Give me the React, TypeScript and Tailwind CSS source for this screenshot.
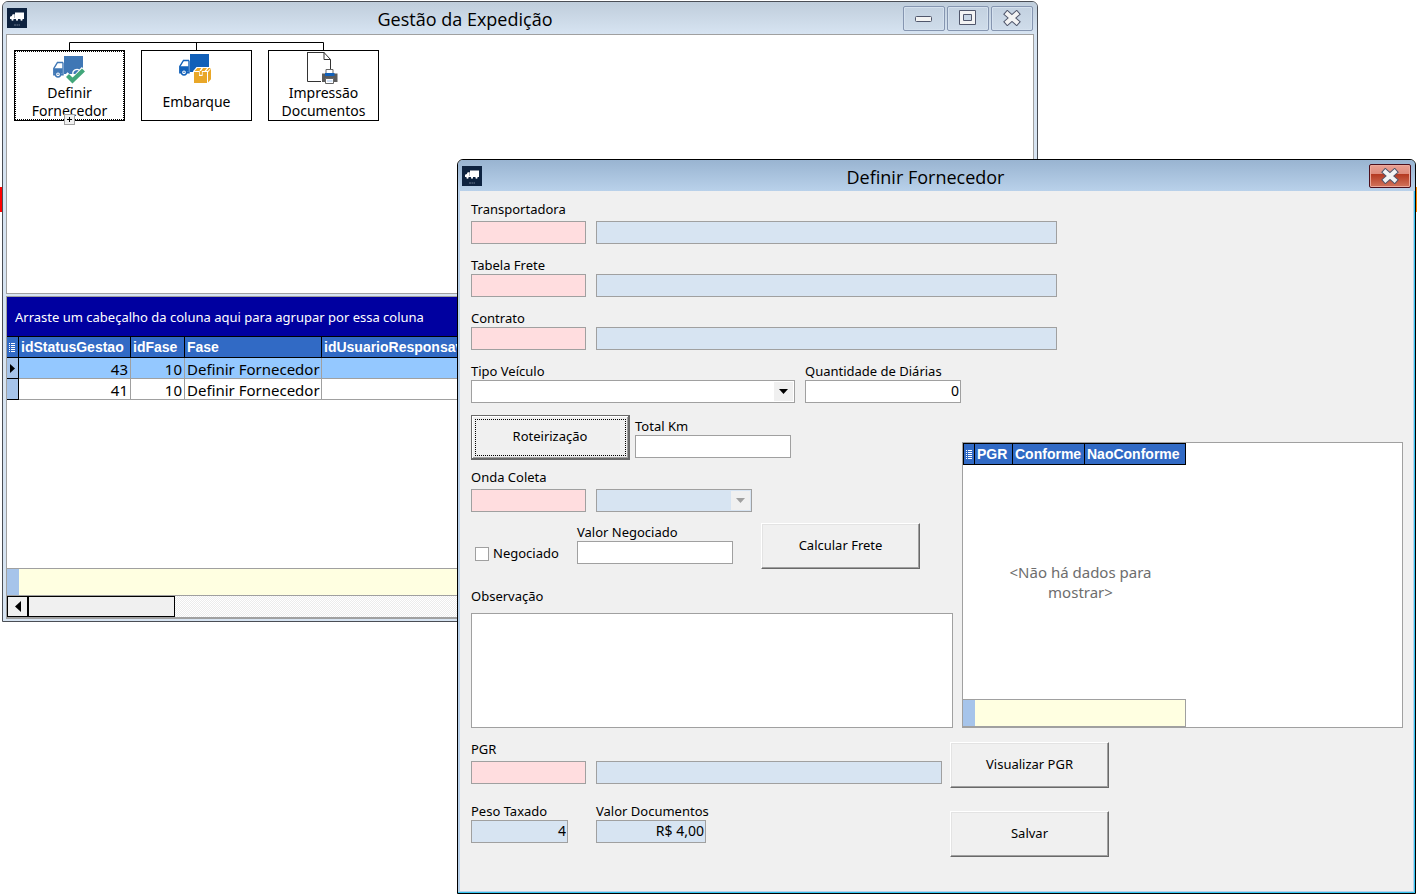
import { useState, type ReactNode } from "react";
import clsx from "clsx";

interface Fase {
    id: number;
    idFase: number;
    fase: string;
}

interface FieldProps {
    id: string;
    label: string;
    spaced?: boolean;
    children: ReactNode;
}

const fases: Fase[] = [
    { id: 43, idFase: 10, fase: "Definir Fornecedor" },
    { id: 41, idFase: 10, fase: "Definir Fornecedor" },
];

const inputBase = "block h-[23px] border border-[#a0a0a0] px-px pb-[2px] text-right text-sm outline-none";
const codeInput = clsx(inputBase, "w-[115px] bg-[#ffdddf]");
const readInput = clsx(inputBase, "bg-[#d7e4f2]");
const whiteInput = clsx(inputBase, "w-[156px] bg-white");
const headCell = "h-[22px] border-y border-r border-black bg-[#316ac5] p-0 pl-[2px] text-left font-[Liberation_Sans] text-sm leading-5 font-bold whitespace-nowrap text-white";
const bodyCell = "h-[21px] border-r border-b border-[#a0a0a0] p-0 px-[2px] pt-[2px] text-[15px] leading-[18px] whitespace-nowrap";

const AppIcon = () => (
    <svg viewBox="0 0 20 20" className="size-5 shrink-0" aria-hidden="true">
        <rect width="20" height="20" fill="#0e2340" />
        <path d="M8 4.500h9v5.500H8z M3 10.500V8.700l1.800-.700.900-1.800h2v4.300z" fill="#fff" />
        <path d="M3 10.500h14" stroke="#fff" />
        <circle cx="5.500" cy="11.700" r="1.100" fill="#fff" />
        <circle cx="10" cy="11.700" r="1.100" fill="#fff" />
        <circle cx="14.500" cy="11.700" r="1.100" fill="#fff" />
        <path d="M7 17h2.500M10 17h1M11.500 17H13" stroke="#6b7a8e" />
    </svg>
);

const Truck = ({ color }: { color: string }) => (
    <>
        <path d="M11 0h19v18H11z" fill={color} />
        <path d="M10 6.5H4.5L.8 12.5v6.3h2M10 6.5v12.3H7.5" fill="none" stroke={color} strokeWidth="1.4" />
        <path d="M1 12.3h8.6v5.5H7.8a3.8 3.8 0 0 0-6 0H1z" fill={color} />
        <path d="M5 8h3.6v4H2.6z" fill="#fff" />
        <circle cx="5" cy="18.3" r="2.6" fill="#fff" stroke={color} strokeWidth="1.5" />
        <circle cx="5" cy="18.3" r=".8" fill={color} />
    </>
);

const TruckCheckIcon = () => (
    <svg viewBox="0 0 32 28" className="h-7 w-8" aria-hidden="true">
        <Truck color="#3f77b5" />
        <path d="M20 18.5a4 4 0 0 1 7-3.500" fill="none" stroke="#fff" strokeWidth="1.3" />
        <path d="M12.500 18.300l7 7L31 13" fill="none" stroke="#fff" strokeWidth="6" />
        <path d="M14.500 19.500l5 5L30.500 14" fill="none" stroke="#41a67a" strokeWidth="4.2" />
    </svg>
);

const TruckBoxIcon = () => (
    <svg viewBox="0 0 33 30" className="h-[30px] w-[33px]" aria-hidden="true">
        <Truck color="#1160b9" />
        <path d="M14 17.2l3.5-4.2h15.5v12l-3.8 4.7H14z" fill="#fff" />
        <path d="M15 18h13v11H15z M15.6 17l2.8-3h4l-2 3z M22 17l2-3h4l-2.4 3z M27.2 17l2.2-3h2.4l-3 3z M29 18.2l3-3.4v10.4l-3 3.4z" fill="#e9a728" />
        <path d="M20 18v4h3.6v-4" fill="#fff" />
        <path d="M20.7 17h2.2v3.8h-2.2z" fill="#e9a728" />
    </svg>
);

const PrintDocIcon = () => (
    <svg viewBox="0 0 31 32" className="h-8 w-[31px]" aria-hidden="true">
        <path d="M.5 0v29.500H14M.5.5H17l6.5 7V17M17 0v7.5h6.5" fill="none" stroke="#333" />
        <path d="M19 17.5h7V22h-7z" fill="#fff" stroke="#666" />
        <path d="M15 21.500h15.5V30H15z" fill="#5b5b5b" />
        <path d="M18 21h9.5v3H18z" fill="#1160b9" />
        <path d="M18.5 26.500h8v5h-8z" fill="#fff" stroke="#666" />
        <path d="M20 29h5.5" stroke="#a9c6ee" />
    </svg>
);

const CloseGlyph = () => (
    <svg viewBox="0 0 18 16" className="h-4 w-[18px]" aria-hidden="true">
        <path d="M4.500 4l9 8M13.500 4l-9 8" stroke="#50566b" strokeWidth="6.2" strokeLinecap="square" />
        <path d="M4.500 4l9 8M13.500 4l-9 8" stroke="#f3f3f3" strokeWidth="4.2" strokeLinecap="square" />
    </svg>
);

const MinimizeGlyph = () => (
    <svg viewBox="0 0 18 16" className="h-4 w-[18px]" aria-hidden="true">
        <rect x=".5" y="6.5" width="16" height="5" rx="1" fill="#f3f3f3" stroke="#50566b" />
    </svg>
);

const MaximizeGlyph = () => (
    <svg viewBox="0 0 18 16" className="h-4 w-[18px]" aria-hidden="true">
        <path d="M.5 .5h16v14H.5z M4.500 4.500v6h8v-6z" fill="#f3f3f3" fillRule="evenodd" stroke="#50566b" />
    </svg>
);

const GridMark = () => (
    <svg viewBox="0 0 6 10" className="h-[10px] w-[6px]" aria-hidden="true">
        <path d="M0 1.500h1M2 1.500h4M0 3.500h1M2 3.500h4M0 5.500h1M2 5.500h4M0 7.500h1M2 7.500h4M0 9.500h1M2 9.500h4" stroke="#fff" />
    </svg>
);

const DropArrow = ({ muted = false }: { muted?: boolean }) => (
    <span className="pointer-events-none absolute top-[2px] right-[2px] flex h-[19px] w-[19px] items-center justify-center bg-[#f0f0f0]">
        <svg viewBox="0 0 9 5" className="h-[5px] w-[9px]" aria-hidden="true">
            <path d="M0 0h9L4.500 5z" fill={muted ? "#a0a0a0" : "#000"} />
        </svg>
    </span>
);

const CaptionButton = ({ label, children }: { label: string; children: ReactNode }) => (
    <button
        type="button"
        aria-label={label}
        className="flex h-[25px] w-[42px] items-center justify-center rounded-[2px] border border-[#8595b0] bg-linear-to-b from-[#c3d1e0] to-[#cfdcea] inset-ring inset-ring-[#d5e1ee]"
    >
        {children}
    </button>
);

const Field = ({ id, label, spaced = false, children }: FieldProps) => (
    <div>
        <label htmlFor={id} className={clsx("block text-[13px] leading-[18px] whitespace-nowrap", spaced && "mb-[3px]")}>
            {label}
        </label>
        {children}
    </div>
);

// Code box followed by a read-only description box
const LookupField = ({ id, label, spaced, width }: { id: string; label: string; spaced?: boolean; width: string }) => (
    <Field id={id} label={label} spaced={spaced}>
        <div className="flex gap-[10px]">
            <input id={id} type="text" className={codeInput} />
            <input type="text" aria-label={`Descrição ${label}`} readOnly className={clsx(readInput, width)} />
        </div>
    </Field>
);

const PushButton = ({ children }: { children: ReactNode }) => (
    <button
        type="button"
        className="h-[46px] w-[159px] border border-t-white border-r-[#696969] border-b-[#696969] border-l-white bg-[#f0f0f0] text-[13px] shadow-[inset_-1px_-1px_0_#a0a0a0,inset_1px_1px_0_#e3e3e3]"
    >
        {children}
    </button>
);

const FlowNode = ({ icon, children, selected = false }: { icon: ReactNode; children: ReactNode; selected?: boolean }) => (
    <button
        type="button"
        className={clsx(
            "relative flex h-[71px] w-[111px] flex-col items-center border border-black bg-white text-sm leading-[18px]",
            selected && "outline-1 -outline-offset-2 outline-dotted outline-black"
        )}
    >
        <span className="flex h-[33px] items-end justify-center pr-[2px]">{icon}</span>
        <span className="flex h-9 items-center text-center">{children}</span>
        {selected && (
            <span className="absolute -bottom-[5px] left-[49px] flex size-[11px] items-center justify-center border border-[#a0a0a0] bg-[#f0f0f0]">
                <svg viewBox="0 0 5 5" className="size-[5px]" aria-hidden="true">
                    <path d="M0 2.500h5M2.500 0v5" stroke="#000" />
                </svg>
            </span>
        )}
    </button>
);

const GestaoWindow = () => (
    <section className="absolute top-px right-[379px] left-[2px] rounded-t-[6px] border border-[#4a4e55] bg-[#d7e4f2] px-[3px] pb-[2px]">
        <header className="-mx-[3px] flex h-8 items-center rounded-t-[5px] bg-linear-to-b from-[#bfcddb] to-[#d7e4f2] px-1">
            <AppIcon />
            <h1 className="flex-1 pt-[2px] text-center font-[Open_Sans] text-lg leading-6">Gestão da Expedição</h1>
            <div className="flex gap-[2px]">
                <CaptionButton label="Minimizar"><MinimizeGlyph /></CaptionButton>
                <CaptionButton label="Maximizar"><MaximizeGlyph /></CaptionButton>
                <CaptionButton label="Fechar"><CloseGlyph /></CaptionButton>
            </div>
        </header>

        <div className="h-[260px] border border-[#a0a0a0] bg-white px-[7px] pt-[7px]">
            <svg viewBox="0 0 255 8" className="ml-[55px] h-2 w-[255px]" aria-hidden="true">
                <path d="M.5 8V.5h254V8M127.500 0v8" fill="none" stroke="#000" />
            </svg>
            <div className="flex gap-4">
                <FlowNode icon={<TruckCheckIcon />} selected>
                    Definir<br />Fornecedor
                </FlowNode>
                <FlowNode icon={<TruckBoxIcon />}>Embarque</FlowNode>
                <FlowNode icon={<PrintDocIcon />}>
                    Impressão<br />Documentos
                </FlowNode>
            </div>
        </div>

        <div className="mt-[2px] border border-b-2 border-[#a0a0a0] bg-white">
            <p className="h-[39px] bg-[#0000a0] pl-2 text-[13px] leading-[40px] text-white">
                Arraste um cabeçalho da coluna aqui para agrupar por essa coluna
            </p>
            <table className="w-full table-fixed border-separate border-spacing-0">
                <colgroup>
                    <col className="w-[12px]" />
                    <col className="w-[112px]" />
                    <col className="w-[54px]" />
                    <col className="w-[137px]" />
                    <col />
                </colgroup>
                <thead>
                    <tr>
                        <th className={headCell} aria-label="Indicador"><GridMark /></th>
                        <th className={headCell}>idStatusGestao</th>
                        <th className={headCell}>idFase</th>
                        <th className={headCell}>Fase</th>
                        <th className={headCell}>idUsuarioResponsavel</th>
                    </tr>
                </thead>
                <tbody>
                    {fases.map((item, index) => (
                        <tr key={item.id} className={clsx(index === 0 && "bg-[#94c8ff]")}>
                            <td className="border-r border-b border-black bg-[#a6c4ea] p-0">
                                {index === 0 && (
                                    <svg viewBox="0 0 5 9" className="mx-auto h-[9px] w-[5px]" aria-hidden="true">
                                        <path d="M0 0l5 4.500L0 9z" />
                                    </svg>
                                )}
                            </td>
                            <td className={clsx(bodyCell, "text-right")}>{item.id}</td>
                            <td className={clsx(bodyCell, "text-right")}>{item.idFase}</td>
                            <td className={bodyCell}>{item.fase}</td>
                            <td className={bodyCell}></td>
                        </tr>
                    ))}
                </tbody>
            </table>
            <div className="h-[168px]" />
            <div className="flex h-7 border-y border-[#a0a0a0] bg-[#ffffe1]">
                <div className="w-3 bg-[#a6c4ea]" />
            </div>
            <div className="flex h-[21px] bg-[repeating-conic-gradient(#ffffff_0_25%,#ececec_0_50%)] bg-[size:2px_2px]">
                <button type="button" aria-label="Rolar para a esquerda" className="flex w-[21px] items-center justify-center border border-black bg-[#f0f0f0]">
                    <svg viewBox="0 0 6 11" className="h-[11px] w-[6px]" aria-hidden="true">
                        <path d="M6 0v11L0 5.500z" />
                    </svg>
                </button>
                <div className="w-[147px] border border-black bg-[#f0f0f0]" />
            </div>
        </div>
    </section>
);

const FornecedorDialog = () => {
    const [negociado, setNegociado] = useState<boolean>(false);

    return (
        <section className="absolute top-[159px] right-px left-[457px] rounded-t-[6px] border border-black bg-[#f0f0f0] shadow-[inset_-1px_-1px_0_#35c5ef,inset_-2px_-2px_0_#b9d1ea,inset_2px_0_0_#b9d1ea]">
            <header className="flex h-[31px] items-center rounded-t-[5px] bg-linear-to-b from-[#99b4d1] to-[#b9d1ea] pr-1 pl-1">
                <AppIcon />
                <h2 className="flex-1 pt-[2px] text-center font-[Open_Sans] text-lg leading-6">Definir Fornecedor</h2>
                <button
                    type="button"
                    aria-label="Fechar"
                    className="flex h-6 w-[42px] items-center justify-center rounded-[2px] border border-[#4c0f1c] bg-[linear-gradient(#e9a093_0%,#dd8a7b_42%,#b53a22_43%,#d2745c_100%)] inset-ring inset-ring-[#eba99c]"
                >
                    <CloseGlyph />
                </button>
            </header>

            <form className="pt-[9px] pr-3 pb-9 pl-[13px]" onSubmit={(e) => e.preventDefault()}>
                <div className="flex flex-col gap-3">
                    <LookupField id="transportadora" label="Transportadora" spaced width="w-[461px]" />
                    <LookupField id="tabelaFrete" label="Tabela Frete" width="w-[461px]" />
                    <LookupField id="contrato" label="Contrato" width="w-[461px]" />
                    <div className="flex gap-[10px]">
                        <Field id="tipoVeiculo" label="Tipo Veículo">
                            <div className="relative">
                                <select id="tipoVeiculo" className={clsx(inputBase, "w-[324px] appearance-none bg-white")} />
                                <DropArrow />
                            </div>
                        </Field>
                        <Field id="diarias" label="Quantidade de Diárias">
                            <input id="diarias" type="text" defaultValue="0" className={whiteInput} />
                        </Field>
                    </div>
                </div>

                <div className="flex gap-[9px] pt-3">
                    <div className="w-[482px]">
                        <div className="flex items-center gap-[5px]">
                            <button type="button" className="h-[45px] w-[159px] border border-r-2 border-b-2 border-[#696969] bg-[#f0f0f0] text-[13px] shadow-[inset_1px_1px_0_#ffffff,inset_-1px_-1px_0_#a0a0a0] outline-1 -outline-offset-5 outline-dotted outline-black">
                                Roteirização
                            </button>
                            <Field id="totalKm" label="Total Km">
                                <input id="totalKm" type="text" className={whiteInput} />
                            </Field>
                        </div>

                        <div className="pt-2">
                            <Field id="ondaColeta" label="Onda Coleta" spaced>
                                <div className="flex gap-[10px]">
                                    <input id="ondaColeta" type="text" className={codeInput} />
                                    <div className="relative">
                                        <select aria-label="Descrição Onda Coleta" disabled className={clsx(readInput, "w-[156px] appearance-none opacity-100")} />
                                        <DropArrow muted />
                                    </div>
                                </div>
                            </Field>
                        </div>

                        <div className="flex pt-[11px]">
                            <label className="flex w-[106px] items-center gap-1 pt-4 pl-1 text-[13px]">
                                <input
                                    type="checkbox"
                                    checked={negociado}
                                    onChange={(e) => setNegociado(e.target.checked)}
                                    className="size-[14px] appearance-none border border-[#a0a0a0] bg-white checked:bg-[#316ac5]"
                                />
                                Negociado
                            </label>
                            <Field id="valorNegociado" label="Valor Negociado">
                                <input id="valorNegociado" type="text" className={whiteInput} />
                            </Field>
                            <div className="ml-7">
                                <PushButton>Calcular Frete</PushButton>
                            </div>
                        </div>

                        <label htmlFor="observacao" className="block pt-[18px] pb-2 text-[13px] leading-[18px]">Observação</label>
                        <textarea id="observacao" className="block h-[115px] w-full resize-none border border-[#a0a0a0] bg-white p-1 text-[13px] outline-none" />
                    </div>

                    <div className="flex h-[286px] flex-1 flex-col self-end border border-[#a0a0a0] bg-white">
                        <table className="w-[223px] table-fixed border-separate border-spacing-0 border-l border-black">
                            <colgroup>
                                <col className="w-[11px]" />
                                <col className="w-[38px]" />
                                <col className="w-[72px]" />
                                <col className="w-[101px]" />
                            </colgroup>
                            <thead>
                                <tr>
                                    <th className={headCell} aria-label="Indicador"><GridMark /></th>
                                    <th className={headCell}>PGR</th>
                                    <th className={headCell}>Conforme</th>
                                    <th className={headCell}>NaoConforme</th>
                                </tr>
                            </thead>
                        </table>
                        <p className="ml-3 flex w-[211px] flex-1 items-center justify-center px-6 text-center text-[15px] leading-5 text-[#6d6d6d]">
                            <span>&lt;Não há dados para mostrar&gt;</span>
                        </p>
                        <div className="flex h-7 w-[223px] border-y border-r border-[#a0a0a0] bg-[#ffffe1]">
                            <div className="w-3 bg-[#a6c4ea]" />
                        </div>
                    </div>
                </div>

                <div className="flex gap-2 pt-3">
                    <div className="w-[471px]">
                        <LookupField id="pgr" label="PGR" spaced width="w-[346px]" />
                        <div className="flex gap-7 pt-[18px]">
                            <Field id="pesoTaxado" label="Peso Taxado">
                                <input id="pesoTaxado" type="text" readOnly value="4" className={clsx(readInput, "w-[97px]")} />
                            </Field>
                            <Field id="valorDocumentos" label="Valor Documentos">
                                <input id="valorDocumentos" type="text" readOnly value="R$ 4,00" className={clsx(readInput, "w-[110px]")} />
                            </Field>
                        </div>
                    </div>
                    <div className="flex flex-col gap-[23px] pt-[2px]">
                        <PushButton>Visualizar PGR</PushButton>
                        <PushButton>Salvar</PushButton>
                    </div>
                </div>
            </form>
        </section>
    );
};

const App = () => {
    return (
        <main className="relative min-h-screen overflow-hidden bg-white font-[Noto_Sans,sans-serif] text-black">
            <div className="absolute top-[187px] left-0 h-[25px] w-[2px] bg-[#ff0000]" />
            <div className="absolute top-[187px] right-0 h-[25px] w-px bg-[#ff8c00]" />
            <GestaoWindow />
            <FornecedorDialog />
        </main>
    );
};

export default App;
